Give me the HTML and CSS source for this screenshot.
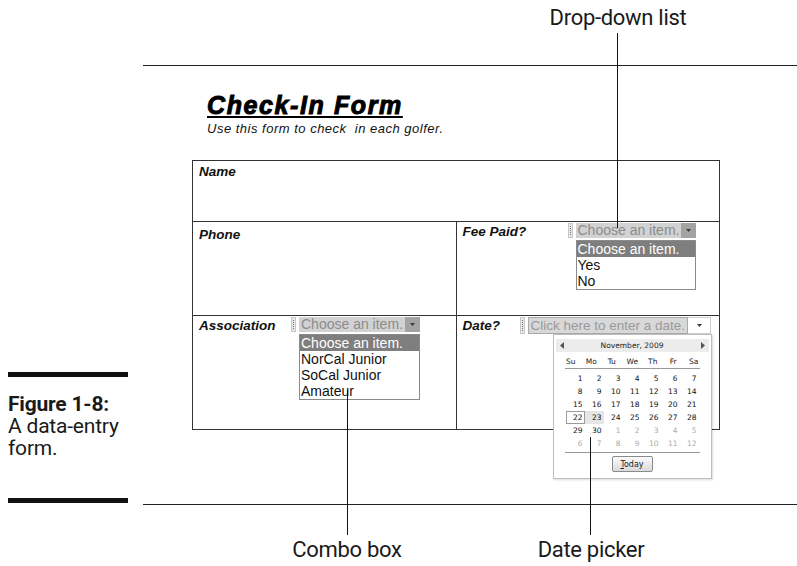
FILE: index.html
```html
<!DOCTYPE html>
<html lang="en">
<head>
    <meta charset="UTF-8">
    <meta name="viewport" content="width=device-width, initial-scale=1.0">
    <title>Figure 1-8: A data-entry form</title>
    <link rel="stylesheet" href="styles.css">
</head>
<body>
<div class="page">
    <!-- callout above the form -->
    <div class="top-callout">
        <span class="callout-label">Drop-down list</span>
    </div>

    <!-- figure caption -->
    <aside class="caption">
        <div class="caption-bar"></div>
        <p class="caption-text"><b>Figure 1-8:</b><br>A data-entry<br>form.</p>
        <div class="caption-bar"></div>
    </aside>

    <!-- the form itself -->
    <section class="panel">
        <h1 class="form-title">Check-In Form</h1>
        <p class="form-subtitle">Use this form to check&nbsp; in each golfer.</p>

        <table class="form-table">
            <tr class="row-name">
                <td colspan="2"><span class="field-label">Name</span></td>
            </tr>
            <tr class="row-phone">
                <td><span class="field-label">Phone</span></td>
                <td>
                    <div class="field-line">
                        <span class="field-label label-fee">Fee Paid?</span>
                        <div class="combo">
                            <span class="combo-handle"></span>
                            <span class="combo-value">Choose an item.</span>
                            <span class="combo-arrow"><svg width="5" height="3" viewBox="0 0 5 3"><polygon points="0,0 5,0 2.5,3" fill="#3a3a3a"/></svg></span>
                            <ul class="combo-list">
                                <li class="selected">Choose an item.</li>
                                <li>Yes</li>
                                <li>No</li>
                            </ul>
                        </div>
                    </div>
                </td>
            </tr>
            <tr class="row-assoc">
                <td>
                    <div class="field-line">
                        <span class="field-label label-assoc">Association</span>
                        <div class="combo">
                            <span class="combo-handle"></span>
                            <span class="combo-value">Choose an item.</span>
                            <span class="combo-arrow"><svg width="5" height="3" viewBox="0 0 5 3"><polygon points="0,0 5,0 2.5,3" fill="#3a3a3a"/></svg></span>
                            <ul class="combo-list">
                                <li class="selected">Choose an item.</li>
                                <li>NorCal Junior</li>
                                <li>SoCal Junior</li>
                                <li>Amateur</li>
                            </ul>
                        </div>
                    </div>
                </td>
                <td>
                    <div class="field-line">
                        <span class="field-label label-date">Date?</span>
                        <div class="combo combo-date">
                            <span class="combo-handle"></span>
                            <span class="combo-value">Click here to enter a date.</span>
                            <span class="combo-arrow"><svg width="5" height="3" viewBox="0 0 5 3"><polygon points="0,0 5,0 2.5,3" fill="#3a3a3a"/></svg></span>

                            <div class="calendar">
                                <div class="cal-head">
                                    <svg width="4" height="7" viewBox="0 0 4 7"><polygon points="4,0 4,7 0,3.5" fill="#555"/></svg>
                                    <span>November, 2009</span>
                                    <svg width="4" height="7" viewBox="0 0 4 7"><polygon points="0,0 0,7 4,3.5" fill="#555"/></svg>
                                </div>
                                <div class="cal-days">
                                    <span>Su</span><span>Mo</span><span>Tu</span><span>We</span><span>Th</span><span>Fr</span><span>Sa</span>
                                </div>
                                <div class="cal-rule"></div>
                                <div class="cal-grid">
                                    <span>1</span><span>2</span><span>3</span><span>4</span><span>5</span><span>6</span><span>7</span>
                                    <span>8</span><span>9</span><span>10</span><span>11</span><span>12</span><span>13</span><span>14</span>
                                    <span>15</span><span>16</span><span>17</span><span>18</span><span>19</span><span>20</span><span>21</span>
                                    <span class="today">22</span><span class="hover">23</span><span>24</span><span>25</span><span>26</span><span>27</span><span>28</span>
                                    <span>29</span><span>30</span><span class="other">1</span><span class="other">2</span><span class="other">3</span><span class="other">4</span><span class="other">5</span>
                                    <span class="other">6</span><span class="other">7</span><span class="other">8</span><span class="other">9</span><span class="other">10</span><span class="other">11</span><span class="other">12</span>
                                </div>
                                <div class="cal-rule"></div>
                                <button class="cal-today"><u>T</u>oday</button>
                            </div>
                        </div>
                    </div>
                </td>
            </tr>
        </table>
    </section>

    <!-- callouts below the form -->
    <div class="bottom-callouts">
        <span class="callout-label">Combo box</span>
        <span class="callout-label">Date picker</span>
    </div>

    <!-- leader lines -->
    <div class="leader leader-dropdown"></div>
    <div class="leader leader-combo"></div>
    <div class="leader leader-date"></div>
</div>
</body>
</html>
```

FILE: styles.css
```css
* {
    box-sizing: border-box;
}

body {
    margin: 0;
    background-color: #fff;
    color: #111;
    font-family: "Liberation Sans", Arial, sans-serif;
}

.page {
    position: relative;
    width: 797px;
    height: 566px;
    display: grid;
    grid-template-columns: 143px 654px;
    grid-template-rows: 65px 440px 61px;
}

/* callout labels */

.callout-label {
    display: block;
    width: 160px;
    text-align: center;
    font-family: "Liberation Sans Narrow", "Arial Narrow", Roboto, sans-serif;
    font-size: 22px;
    line-height: 26px;
    letter-spacing: -0.3px;
    color: #1a1a1a;
}

.top-callout {
    grid-column: 2;
    grid-row: 1;
    padding-left: 395px;
    padding-top: 5px;
}

.bottom-callouts {
    grid-column: 2;
    grid-row: 3;
    display: flex;
    gap: 84px;
    padding-left: 124px;
    padding-top: 32px;
}

.leader {
    position: absolute;
    width: 1px;
    background-color: #111;
    z-index: 3;
}

.leader-dropdown {
    left: 617px;
    top: 33px;
    height: 195px;
}

.leader-combo {
    left: 347px;
    top: 390px;
    height: 145px;
}

.leader-date {
    left: 590px;
    top: 437px;
    height: 98px;
}

/* caption */

.caption {
    grid-column: 1;
    grid-row: 2;
    align-self: end;
    height: 131px;
    margin: 0 0 2px 8px;
    width: 120px;
    display: flex;
    flex-direction: column;
}

.caption-bar {
    height: 5px;
    background-color: #111;
}

.caption-text {
    margin: 16px 0 0 0;
    flex: 1;
    font-family: "Liberation Sans Narrow", "Arial Narrow", Roboto, sans-serif;
    font-size: 21px;
    line-height: 22px;
    letter-spacing: -0.2px;
    color: #1a1a1a;
}

/* panel */

.panel {
    grid-column: 2;
    grid-row: 2;
    border-top: 1px solid #222;
    border-bottom: 1px solid #222;
    padding: 24px 0 0 49px;
}

.form-title {
    margin: 0 0 0 15px;
    font-size: 25px;
    line-height: 30px;
    font-style: italic;
    font-weight: bold;
    letter-spacing: 1.6px;
    color: #000;
    -webkit-text-stroke: 1px #000;
    text-decoration: underline;
    text-decoration-thickness: 2px;
    text-underline-offset: 2px;
}

.form-subtitle {
    margin: 2px 0 0 15px;
    font-size: 13px;
    line-height: 14px;
    font-style: italic;
    letter-spacing: 0.5px;
    color: #111;
}

.form-table {
    margin-top: 24px;
    width: 528px;
    table-layout: fixed;
    border-collapse: collapse;
}

.form-table td {
    border: 1px solid #333;
    vertical-align: top;
    padding: 1px 6px;
}

.row-name {
    height: 61px;
}

.row-name td {
    padding-top: 1px;
}

.row-phone {
    height: 94px;
}

.row-phone td:first-child {
    padding-top: 3px;
}

.row-assoc {
    height: 114px;
}

.field-line {
    display: flex;
    align-items: flex-start;
}

.field-label {
    display: inline-block;
    font-size: 13.5px;
    line-height: 16px;
    font-weight: bold;
    font-style: italic;
    color: #111;
}

.field-line .field-label {
    margin-top: 1px;
}

.label-fee {
    width: 105px;
}

.label-assoc {
    width: 92px;
}

.label-date {
    width: 57px;
}

/* combo boxes */

.combo {
    position: relative;
    display: flex;
    height: 15px;
}

.combo-handle {
    position: relative;
    width: 5px;
    margin-right: 3px;
    background-color: #e6e6e6;
    border: 1px solid #c8c8c8;
}

.combo-handle::after {
    content: "";
    position: absolute;
    left: 1px;
    top: 2px;
    bottom: 2px;
    border-left: 1px dotted #777;
}

.combo-value {
    padding: 0 2px 0 2px;
    background-color: #d2d2d2;
    color: #8c8c8c;
    font-size: 14px;
    line-height: 15px;
    white-space: nowrap;
}

.combo-arrow {
    width: 15px;
    background-color: #a3a3a3;
    display: flex;
    align-items: center;
    justify-content: center;
}

.combo-list {
    position: absolute;
    left: 8px;
    right: 0;
    top: calc(100% + 2px);
    margin: 0;
    padding: 0;
    list-style: none;
    border: 1px solid #8a8a8a;
    background-color: #fff;
    font-size: 14px;
    line-height: 16px;
    color: #111;
    z-index: 2;
}

.combo-list li {
    padding-left: 1px;
    white-space: nowrap;
}

.combo-list .selected {
    background-color: #7e7e7e;
    color: #fff;
}

.combo-date {
    height: 17px;
}

.combo-date .combo-value {
    font-size: 13.5px;
    line-height: 15px;
    border: 1px solid #a9a9a9;
    background-color: #d8d8d8;
    color: #9a9a9a;
}

.combo-date .combo-arrow {
    width: 23px;
    background-color: #fff;
    border: 1px solid #cfcfcf;
    border-left: none;
}

/* calendar popup */

.calendar {
    position: absolute;
    left: 33px;
    top: 100%;
    width: 159px;
    height: 145px;
    padding: 0 2px;
    border: 1px solid #bdbdbd;
    background-color: #fff;
    box-shadow: 1px 1px 2px rgba(0, 0, 0, 0.15);
    font-family: "DejaVu Sans", Verdana, sans-serif;
    font-size: 7.5px;
    color: #222;
    z-index: 2;
}

.cal-head {
    margin-top: 4px;
    height: 13px;
    padding: 0 4px;
    background-color: #ececec;
    display: flex;
    align-items: center;
    justify-content: space-between;
}

.cal-days {
    margin: 4px 0 0 5px;
    display: grid;
    grid-template-columns: repeat(7, 20.5px);
    height: 12px;
    line-height: 12px;
    text-align: center;
}

.cal-rule {
    margin: 0 0 0 9px;
    width: 135px;
    height: 1px;
    background-color: #9a9a9a;
}

.cal-grid {
    margin: 3px 0 2px 10px;
    display: grid;
    grid-template-columns: repeat(7, 19px);
    grid-auto-rows: 13px;
    line-height: 13px;
    color: #111;
}

.cal-grid span {
    text-align: right;
    padding-right: 2px;
}

.cal-grid .other {
    color: #ababab;
}

.cal-grid .today {
    box-shadow: inset 0 0 0 1px #9a9a9a;
}

.cal-grid .hover {
    background-color: #e6e6e6;
}

.cal-today {
    display: block;
    margin: 3px auto 0;
    width: 41px;
    height: 16px;
    padding: 0;
    border: 1px solid #8a8a8a;
    border-radius: 2px;
    background: linear-gradient(#fbfbfb, #dadada);
    font-family: "DejaVu Sans", Verdana, sans-serif;
    font-size: 8px;
    color: #222;
}
```
